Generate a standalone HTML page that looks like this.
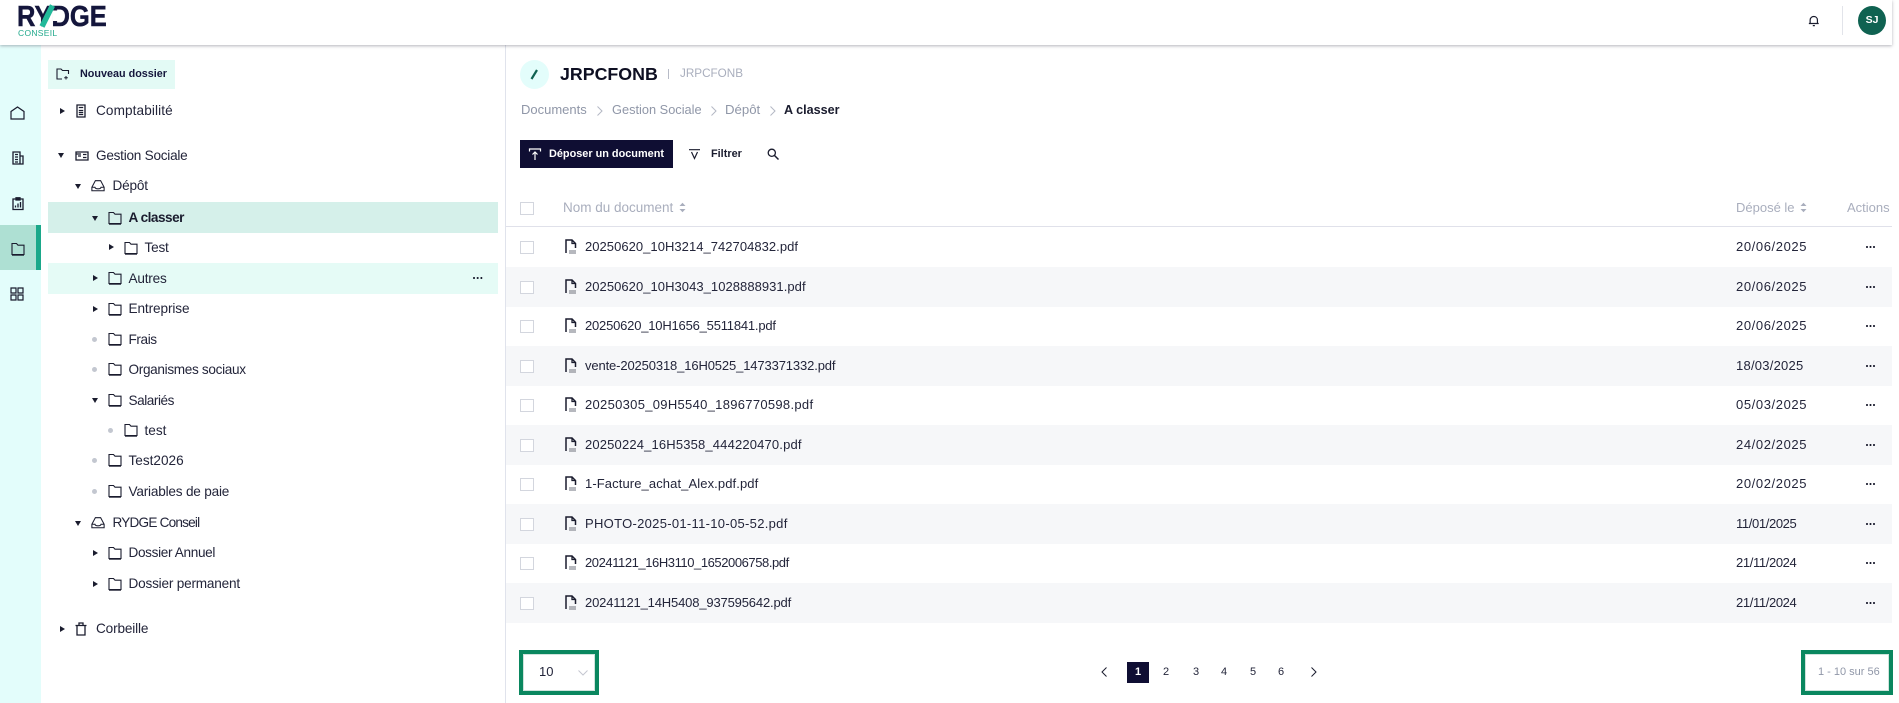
<!DOCTYPE html>
<html lang="fr">
<head>
<meta charset="utf-8">
<title>Documents</title>
<style>
*{box-sizing:border-box}
html,body{margin:0;padding:0;width:1899px;height:703px;overflow:hidden;background:#fff;font-family:"Liberation Sans",sans-serif;color:#1a1c2e}
.a{position:absolute}
.t{position:absolute;white-space:nowrap;line-height:18px;height:18px}
svg{position:absolute;overflow:visible;fill:none;stroke:#1a1c2e;stroke-width:1.2}
.tree{font-size:13.6px;color:#23253a}
.tree .t{margin-top:1px;margin-left:-.5px}
.caret{position:absolute;width:0;height:0}
.cr{border-left:5px solid #1a1c2e;border-top:3px solid transparent;border-bottom:3px solid transparent;margin-left:-1px}
.cd{border-top:5px solid #1a1c2e;border-left:3px solid transparent;border-right:3px solid transparent}
.dot{position:absolute;width:5px;height:5px;border-radius:50%;background:#c3c7d0}
.cb{position:absolute;left:520px;width:14px;height:13px;border:1px solid #d3d6de;background:#fff}
.cb.r{margin-top:1px}
.row{position:absolute;left:506px;width:1386px;height:40px}
.fn{position:absolute;left:585px;margin-top:1px;font-size:13px;color:#23253a;white-space:nowrap;line-height:18px}
.dt{position:absolute;left:1736px;margin-top:1px;font-size:13px;letter-spacing:.6px;color:#23253a;white-space:nowrap;line-height:18px}
.dots{position:absolute;left:1866px;width:9px;height:2px;background:radial-gradient(circle at 1px 1px,#1a1c2e 1px,transparent 1.1px) 0 0/3.5px 2px repeat-x}
.grey{color:#a9aebd}
.pg{position:absolute;top:663px;font-size:11px;line-height:18px;width:12px;text-align:center;color:#23253a}
.gbox{border:4px solid #0a875f;background:#fff;box-shadow:inset 0 0 0 1px #cfe3dc}
</style>
</head>
<body>
<svg width="0" height="0" style="position:absolute">
<defs>
<symbol id="folder" viewBox="0 0 14 14"><path d="M1 12.500V1.500H5.500L7 3.200H13V12.500H1Z" fill="none" stroke="#1a1c2e" stroke-width="1.100"/><path d="M1 13H13" stroke="#1a1c2e" stroke-width="1.400"/></symbol>
<symbol id="tray" viewBox="0 0 16 14"><path d="M1 9V13H15V9L11 1.500H5L1 9ZM1 9H4.500C5 11.400 11 11.400 11.500 9H15" fill="none" stroke="#1a1c2e" stroke-width="1.200"/></symbol>
<symbol id="file" viewBox="0 0 12 15"><path d="M1 14V1H7L10.500 4.500V9" fill="none" stroke="#1a1c2e" stroke-width="1.500"/><path d="M7 1V4.500H10.500" fill="none" stroke="#1a1c2e" stroke-width="1.300"/><path d="M4 12H11M4 14H11" stroke="#6d707c" stroke-width="1"/></symbol>
<symbol id="sort" viewBox="0 0 7 11"><path d="M.5 4L3.500 .8L6.500 4ZM.5 7L3.500 10.200L6.500 7Z" fill="#a9aebd" stroke="none"/></symbol>
</defs>
</svg>

<!-- Header -->
<div class="a" style="left:0;top:0;width:1892px;height:45px;background:#fff;box-shadow:0 1px 3px rgba(40,40,60,.35);z-index:3"></div>
<div class="a" style="left:17px;top:0;height:28px;width:92px;z-index:4;overflow:hidden">
  <div class="t" style="left:0;top:2px;font-size:29px;font-weight:bold;line-height:30px;height:30px;color:#14163c;transform:scaleX(.88);transform-origin:0 0;-webkit-text-stroke:.5px #14163c">RYDGE</div>
</div>
<svg style="left:0;top:0;z-index:5" width="120" height="40"><path d="M53 10.500H58.500V21H53Z" fill="#fff" stroke="none"/><path d="M42 26.500L52.500 5.500" stroke="#22b99a" stroke-width="5.500"/></svg>
<div class="t" style="left:18px;top:27px;font-size:8.500px;line-height:12px;height:12px;color:#22a98c;z-index:5;letter-spacing:.3px">CONSEIL</div>

<svg style="left:1808px;top:14px;z-index:5" width="12" height="13" viewBox="0 0 14 15"><path d="M2.500 11V7C2.500 1.500 11 1.500 11 7V11ZM1 11H12.500M5.600 13.500H8" stroke-width="1.400"/></svg>
<div class="a" style="left:1842px;top:6px;width:1px;height:29px;background:#e2e4ea;z-index:5"></div>
<div class="a" style="left:1858px;top:6px;width:28px;height:29px;border-radius:50%;background:#0f6251;color:#fff;font-size:10.500px;font-weight:bold;text-align:center;line-height:29px;z-index:5">SJ</div>

<!-- Left rail -->
<div class="a" style="left:0;top:45px;width:41px;height:658px;background:#e3fdfb"></div>
<div class="a" style="left:0;top:225px;width:41px;height:45px;background:#aee0d3"></div>
<div class="a" style="left:36px;top:225px;width:5px;height:45px;background:#1aa88a"></div>
<svg style="left:10px;top:106px" width="15" height="14" viewBox="0 0 15 14"><path d="M1 13V5.500L7.500 1L14 5.500V13ZM1 13H14" stroke-width="1.200"/></svg>
<svg style="left:12px;top:151px" width="12" height="14" viewBox="0 0 12 14"><path d="M1 1H8V13H1ZM8 5H11V13H8ZM3 3.500H6M3 6H6M3 8.500H6M3 11H6" stroke-width="1.300"/></svg>
<svg style="left:12px;top:197px" width="12" height="13" viewBox="0 0 12 13"><path d="M1 2H11V12.500H1ZM4 .8H8V3H4ZM3.500 10.500V8.500M6 10.500V6.500M8.500 10.500V5" stroke-width="1.300"/></svg>
<svg style="left:11px;top:242px" width="14" height="14"><use href="#folder"/></svg>
<svg style="left:10px;top:287px" width="14" height="14" viewBox="0 0 14 14"><path d="M1 1H6V6H1ZM8 1H13V6H8ZM1 8H6V13H1ZM8 8H13V13H8Z" stroke-width="1.200"/></svg>

<!-- Tree panel -->
<div class="a" style="left:48px;top:60px;width:127px;height:29px;background:#e3faf5"></div>
<svg style="left:56px;top:68px" width="14" height="12" viewBox="0 0 14 12"><path d="M6 11H1V1H5L6.500 2.500H12.500V6" stroke-width="1.100"/><path d="M10 8V11.500M8.200 9.700H11.800" stroke-width="1"/></svg>
<div class="t" style="left:80px;top:65px;font-size:10.800px;font-weight:bold;color:#14163c">Nouveau dossier</div>

<div class="a" style="left:48px;top:202px;width:450px;height:31px;background:#d5f0ea"></div>
<div class="a" style="left:48px;top:263px;width:450px;height:31px;background:#e5fbf6"></div>
<div class="a" style="left:473px;top:277px;width:10px;height:2px;background:radial-gradient(circle at 1px 1px,#1a1c2e 1px,transparent 1.100px) 0 0/3.700px 2px repeat-x"></div>

<div class="tree">
<i class="caret cr" style="left:61px;top:108px"></i>
<svg style="left:76px;top:104px" width="10" height="14" viewBox="0 0 10 14"><path d="M1 1H9V13H1ZM2.800 3.500H7.200M2.800 6.500H7.200M2.800 8.500H7.200M2.800 10.500H7.200" stroke-width="1.300"/></svg>
<div class="t" style="left:96.500px;top:100.500px;letter-spacing:.1px">Comptabilité</div>
<i class="caret cd" style="left:58px;top:153px"></i>
<svg style="left:75px;top:151px" width="14" height="10" viewBox="0 0 14 10"><path d="M1 1H13V9H1ZM3 5H6M8 3.500H11.500M8 6.500H11.500M1 3H6" stroke-width="1.300"/></svg>
<div class="t" style="left:96.500px;top:145.500px;letter-spacing:-.25px">Gestion Sociale</div>
<i class="caret cd" style="left:75px;top:184px"></i>
<svg style="left:91px;top:179px" width="14" height="13"><use href="#tray"/></svg>
<div class="t" style="left:113px;top:175.500px;letter-spacing:-.2px">Dépôt</div>
<i class="caret cd" style="left:92px;top:216px"></i>
<svg style="left:108px;top:211px" width="14" height="14"><use href="#folder"/></svg>
<div class="t" style="left:129px;top:207.500px;font-weight:bold;color:#1a1c2e;letter-spacing:-.5px">A classer</div>
<i class="caret cr" style="left:110px;top:244px"></i>
<svg style="left:124px;top:241px" width="14" height="14"><use href="#folder"/></svg>
<div class="t" style="left:145px;top:237.500px;letter-spacing:-.2px">Test</div>
<i class="caret cr" style="left:94px;top:275px"></i>
<svg style="left:108px;top:271px" width="14" height="14"><use href="#folder"/></svg>
<div class="t" style="left:129px;top:268.500px;letter-spacing:-.2px">Autres</div>
<i class="caret cr" style="left:94px;top:306px"></i>
<svg style="left:108px;top:302px" width="14" height="14"><use href="#folder"/></svg>
<div class="t" style="left:129px;top:298.500px;letter-spacing:-.1px">Entreprise</div>
<i class="dot" style="left:92px;top:337px"></i>
<svg style="left:108px;top:332px" width="14" height="14"><use href="#folder"/></svg>
<div class="t" style="left:129px;top:329.500px;letter-spacing:-.4px">Frais</div>
<i class="dot" style="left:92px;top:367px"></i>
<svg style="left:108px;top:362px" width="14" height="14"><use href="#folder"/></svg>
<div class="t" style="left:129px;top:360px;letter-spacing:-.33px">Organismes sociaux</div>
<i class="caret cd" style="left:92px;top:398px"></i>
<svg style="left:108px;top:393px" width="14" height="14"><use href="#folder"/></svg>
<div class="t" style="left:129px;top:390.500px;letter-spacing:-.45px">Salariés</div>
<i class="dot" style="left:108px;top:428px"></i>
<svg style="left:124px;top:423px" width="14" height="14"><use href="#folder"/></svg>
<div class="t" style="left:145px;top:420.500px">test</div>
<i class="dot" style="left:92px;top:458px"></i>
<svg style="left:108px;top:453px" width="14" height="14"><use href="#folder"/></svg>
<div class="t" style="left:129px;top:451px">Test2026</div>
<i class="dot" style="left:92px;top:489px"></i>
<svg style="left:108px;top:484px" width="14" height="14"><use href="#folder"/></svg>
<div class="t" style="left:129px;top:481.500px;letter-spacing:-.2px">Variables de paie</div>
<i class="caret cd" style="left:75px;top:521px"></i>
<svg style="left:91px;top:516px" width="14" height="13"><use href="#tray"/></svg>
<div class="t" style="left:113px;top:512.500px;letter-spacing:-.8px">RYDGE Conseil</div>
<i class="caret cr" style="left:94px;top:550px"></i>
<svg style="left:108px;top:546px" width="14" height="14"><use href="#folder"/></svg>
<div class="t" style="left:129px;top:543px;letter-spacing:-.35px">Dossier Annuel</div>
<i class="caret cr" style="left:94px;top:581px"></i>
<svg style="left:108px;top:577px" width="14" height="14"><use href="#folder"/></svg>
<div class="t" style="left:129px;top:573.500px;letter-spacing:-.2px">Dossier permanent</div>
<i class="caret cr" style="left:61px;top:626px"></i>
<svg style="left:75px;top:622px" width="12" height="14" viewBox="0 0 12 14"><path d="M.5 3.500H11.500M4 3.500V1H8V3.500M2 3.500V13H10V3.500" stroke-width="1.300"/></svg>
<div class="t" style="left:96.500px;top:619px;letter-spacing:-.15px">Corbeille</div>
</div>

<!-- Divider -->
<div class="a" style="left:505px;top:45px;width:1px;height:658px;background:#e0e3ec"></div>

<!-- Title -->
<div class="a" style="left:520px;top:60px;width:29px;height:29px;border-radius:50%;background:#e3fdfb"></div>
<svg style="left:520px;top:60px" width="29" height="29"><path d="M11.500 19L17 10" stroke="#0f6251" stroke-width="2.200"/></svg>
<div class="t" style="left:560px;top:65px;font-size:17.800px;font-weight:bold;color:#0e0f22">JRPCFONB</div>
<div class="a" style="left:668px;top:69px;width:1px;height:10px;background:#b7bbc7"></div>
<div class="t grey" style="left:680px;top:65px;font-size:11.700px">JRPCFONB</div>

<!-- Breadcrumb -->
<div class="t" style="left:521px;top:101px;font-size:13px;color:#9097a8">Documents</div>
<div class="t" style="left:612px;top:101px;font-size:12.800px;color:#9097a8">Gestion Sociale</div>
<div class="t" style="left:725px;top:101px;font-size:13.200px;color:#9097a8">Dépôt</div>
<div class="t" style="left:784px;top:101px;font-size:12.600px;font-weight:bold;color:#1a1c2e">A classer</div>
<svg style="left:597px;top:106px" width="6" height="10"><path d="M.5 .5L5 5L.5 9.500" stroke="#b4b8c4" stroke-width="1"/></svg>
<svg style="left:711px;top:106px" width="6" height="10"><path d="M.5 .5L5 5L.5 9.500" stroke="#b4b8c4" stroke-width="1"/></svg>
<svg style="left:770px;top:106px" width="6" height="10"><path d="M.5 .5L5 5L.5 9.500" stroke="#b4b8c4" stroke-width="1"/></svg>

<!-- Toolbar -->
<div class="a" style="left:520px;top:140px;width:153px;height:28px;background:#0f0e33"></div>
<svg style="left:529px;top:148px" width="12" height="12" viewBox="0 0 12 12"><path d="M.5 3.500V1H11.500V3.500M6 12V4M3.500 6.500L6 4L8.500 6.500" stroke="#fff" stroke-width="1.200"/></svg>
<div class="t" style="left:549px;top:145px;font-size:10.900px;font-weight:bold;color:#fff">Déposer un document</div>
<svg style="left:689px;top:149px" width="11" height="10" viewBox="0 0 11 10"><path d="M0 .7H11M2.500 3L5.500 9.500L8.500 3" stroke-width="1.200"/></svg>
<div class="t" style="left:711px;top:145px;font-size:10.900px;font-weight:bold;color:#1a1c2e">Filtrer</div>
<svg style="left:767px;top:148px" width="12" height="12" viewBox="0 0 12 12"><circle cx="4.800" cy="4.800" r="3.600" stroke-width="1.300"/><path d="M7.500 7.500L11.500 11.500" stroke-width="1.500"/></svg>

<!-- Table head -->
<div class="cb" style="top:202px"></div>
<div class="t" style="left:563px;top:199px;font-size:13.500px;color:#a9aebd">Nom du document</div>
<svg style="left:679px;top:202px" width="7" height="11"><use href="#sort"/></svg>
<div class="t" style="left:1736px;top:199px;font-size:13px;color:#a9aebd">Déposé le</div>
<svg style="left:1800px;top:202px" width="7" height="11"><use href="#sort"/></svg>
<div class="t" style="left:1847px;top:199px;font-size:13px;color:#a9aebd">Actions</div>
<div class="a" style="left:506px;top:226px;width:1386px;height:1px;background:#e0e1ea"></div>

<!-- Rows -->
<div class="row" style="top:267px;background:#f6f7f9"></div>
<div class="row" style="top:346px;background:#f6f7f9"></div>
<div class="row" style="top:425px;background:#f6f7f9"></div>
<div class="row" style="top:504px;background:#f6f7f9"></div>
<div class="row" style="top:583px;background:#f6f7f9"></div>

<div class="cb r" style="top:240px"></div><svg style="left:565px;top:239px" width="12" height="15"><use href="#file"/></svg><div class="fn" style="top:236.500px;letter-spacing:.04px">20250620_10H3214_742704832.pdf</div><div class="dt" style="top:236.500px">20/06/2025</div><div class="dots" style="top:246px"></div>
<div class="cb r" style="top:279.500px"></div><svg style="left:565px;top:279px" width="12" height="15"><use href="#file"/></svg><div class="fn" style="top:276.500px;letter-spacing:.05px">20250620_10H3043_1028888931.pdf</div><div class="dt" style="top:276.500px">20/06/2025</div><div class="dots" style="top:286px"></div>
<div class="cb r" style="top:319px"></div><svg style="left:565px;top:318px" width="12" height="15"><use href="#file"/></svg><div class="fn" style="top:316px;letter-spacing:-.2px">20250620_10H1656_5511841.pdf</div><div class="dt" style="top:316px">20/06/2025</div><div class="dots" style="top:325px"></div>
<div class="cb r" style="top:358.500px"></div><svg style="left:565px;top:358px" width="12" height="15"><use href="#file"/></svg><div class="fn" style="top:355.500px;letter-spacing:-.13px">vente-20250318_16H0525_1473371332.pdf</div><div class="dt" style="top:355.500px;letter-spacing:.24px">18/03/2025</div><div class="dots" style="top:365px"></div>
<div class="cb r" style="top:398px"></div><svg style="left:565px;top:397px" width="12" height="15"><use href="#file"/></svg><div class="fn" style="top:395px;letter-spacing:.3px">20250305_09H5540_1896770598.pdf</div><div class="dt" style="top:395px">05/03/2025</div><div class="dots" style="top:404px"></div>
<div class="cb r" style="top:437.500px"></div><svg style="left:565px;top:437px" width="12" height="15"><use href="#file"/></svg><div class="fn" style="top:434.500px;letter-spacing:.16px">20250224_16H5358_444220470.pdf</div><div class="dt" style="top:434.500px">24/02/2025</div><div class="dots" style="top:444px"></div>
<div class="cb r" style="top:477px"></div><svg style="left:565px;top:476px" width="12" height="15"><use href="#file"/></svg><div class="fn" style="top:474px;letter-spacing:.1px">1-Facture_achat_Alex.pdf.pdf</div><div class="dt" style="top:474px">20/02/2025</div><div class="dots" style="top:483px"></div>
<div class="cb r" style="top:516.500px"></div><svg style="left:565px;top:516px" width="12" height="15"><use href="#file"/></svg><div class="fn" style="top:513.500px;letter-spacing:.3px">PHOTO-2025-01-11-10-05-52.pdf</div><div class="dt" style="top:513.500px;letter-spacing:-.37px">11/01/2025</div><div class="dots" style="top:523px"></div>
<div class="cb r" style="top:556px"></div><svg style="left:565px;top:555px" width="12" height="15"><use href="#file"/></svg><div class="fn" style="top:553px;letter-spacing:-.43px">20241121_16H3110_1652006758.pdf</div><div class="dt" style="top:553px;letter-spacing:-.37px">21/11/2024</div><div class="dots" style="top:562px"></div>
<div class="cb r" style="top:595.500px"></div><svg style="left:565px;top:595px" width="12" height="15"><use href="#file"/></svg><div class="fn" style="top:592.500px;letter-spacing:-.16px">20241121_14H5408_937595642.pdf</div><div class="dt" style="top:592.500px;letter-spacing:-.37px">21/11/2024</div><div class="dots" style="top:602px"></div>

<!-- Page size -->
<div class="a gbox" style="left:519px;top:650px;width:80px;height:45px"></div>
<div class="t" style="left:539px;top:663px;font-size:13px;color:#23253a">10</div>
<svg style="left:578px;top:670px" width="10" height="6"><path d="M.5 .5L5 5L9.500 .5" stroke="#c4c7d0" stroke-width="1"/></svg>

<!-- Pagination -->
<svg style="left:1101px;top:667px" width="6" height="10"><path d="M5.500 .5L1 5L5.500 9.500" stroke-width="1"/></svg>
<div class="a" style="left:1127px;top:662px;width:22px;height:21px;background:#0f0e33"></div>
<div class="pg" style="left:1132px;color:#fff;font-weight:bold">1</div>
<div class="pg" style="left:1160px">2</div>
<div class="pg" style="left:1190px">3</div>
<div class="pg" style="left:1218px">4</div>
<div class="pg" style="left:1247px">5</div>
<div class="pg" style="left:1275px">6</div>
<svg style="left:1311px;top:667px" width="6" height="10"><path d="M.5 .5L5 5L.5 9.500" stroke-width="1"/></svg>

<!-- Count -->
<div class="a gbox" style="left:1801px;top:650px;width:92px;height:45px"></div>
<div class="t" style="left:1818px;top:663px;font-size:11px;color:#9097a8">1 - 10 sur 56</div>
</body>
</html>
